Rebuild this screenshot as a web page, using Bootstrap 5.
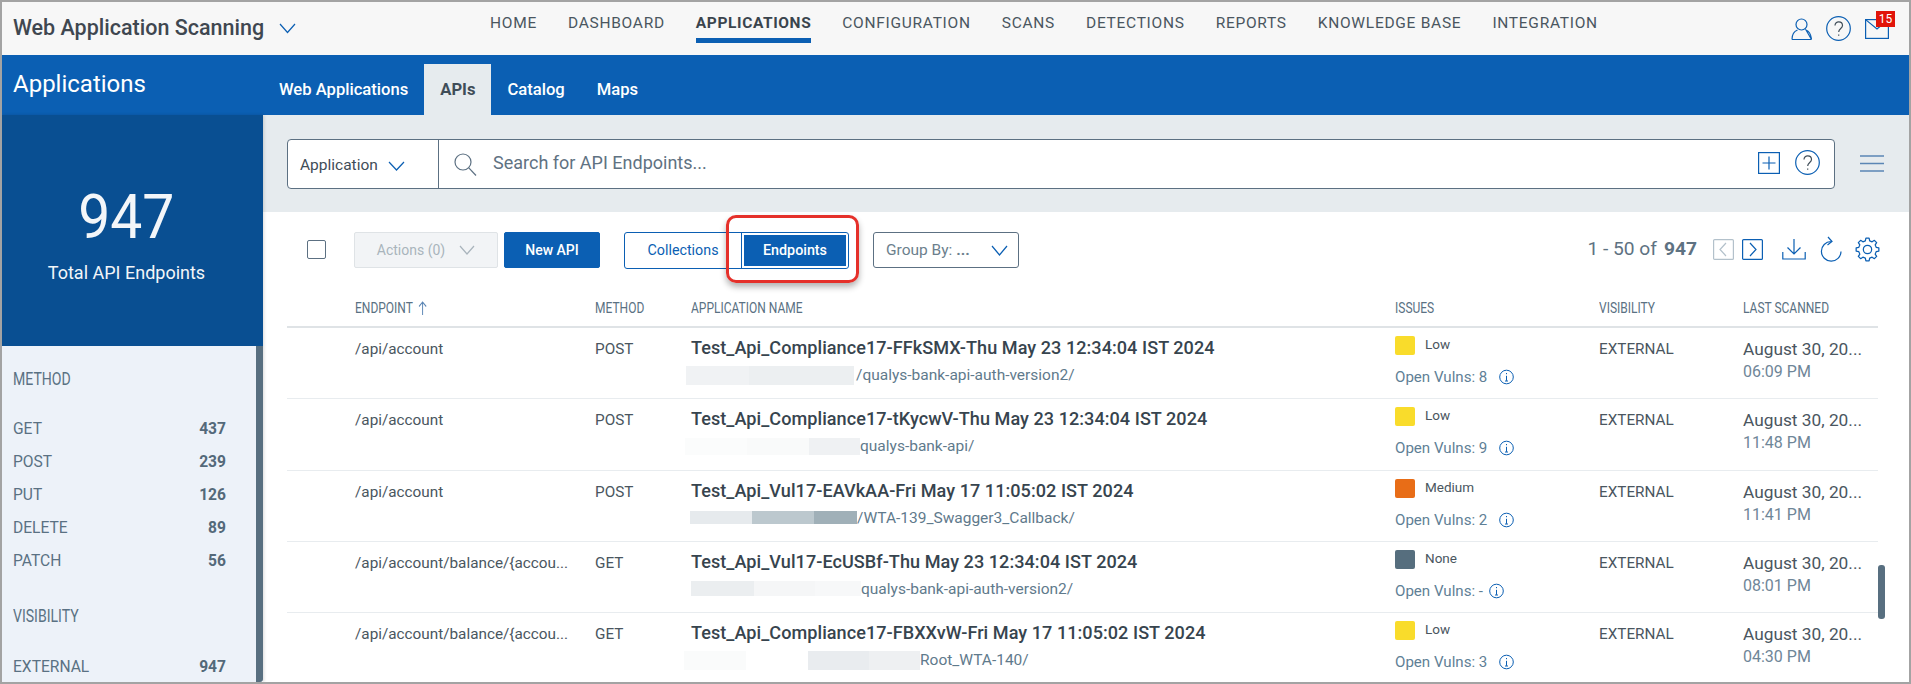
<!DOCTYPE html>
<html lang="en"><head><meta charset="utf-8"><title>Web Application Scanning</title>
<link href="https://cdn.jsdelivr.net/npm/bootstrap@5.3.0/dist/css/bootstrap.min.css" rel="stylesheet">
<style>
html,body{height:100%;margin:0;overflow:hidden;background:#fff}
body{font-family:Roboto,"Liberation Sans",sans-serif;color:#3f4d58}
svg{display:block;fill:none;stroke:#0b5fb3;stroke-width:1.2}
.frame{height:684px;border:2px solid #a3a3a3;display:flex;flex-direction:column;overflow:hidden}
.topbar{height:53px;background:#f7f7f7;flex:none}
.brand-name{font-size:21.5px;font-weight:500;color:#3f4750;margin-left:11px;width:250px;white-space:nowrap}
.brand-chev{margin:0 0 0 16px}
.mainnav{margin-left:194px;gap:31px;height:41px}
.mainnav .nav-link{padding:13px 0 0;height:41px;font-size:15.5px;letter-spacing:.72px;color:#4a5660;line-height:17px}
.mainnav .nav-link.active{font-weight:700;color:#3a444d;border-bottom:5px solid #0b5fb3;letter-spacing:.6px}
.top-icons{margin-left:auto;margin-right:20px;gap:14px}
.mail-wrap{position:relative}
.mail-badge{position:absolute;left:11px;top:-8px;width:19px;height:16px;background:#e1140a;color:#fff;font-size:12px;line-height:16px;text-align:center}
.bluebar{height:60px;background:#0b5fb3;flex:none}
.bar-title{width:261px;padding-left:11px;color:#fff;font-size:24px;padding-top:15px;line-height:28px}
.tabrow{align-self:flex-end;height:51px}
.tabrow .nav-link{padding:0 16px;line-height:52px;height:51px;color:#fff;font-size:16.6px;font-weight:500}
.tabrow .nav-link.active{background:#e6ebee;color:#3f4d58;font-weight:700}
.bodyrow{flex:1;min-height:0}
.leftcol{width:261px;flex:none;display:flex;flex-direction:column;box-shadow:1px 0 3px rgba(0,0,0,.15);position:relative}
.statbox{height:231px;background:#094f92;color:#f3f6f9;text-align:center;flex:none;padding:64px 12px 0 0}
.statnum{font-size:62px;line-height:76px;font-weight:400;display:inline-block;transform:scaleX(.92)}
.stattext{font-size:18px;line-height:24px;margin-top:6px}
.facets{flex:1;background:#edf2f9;border-right:7px solid #586f80;padding:0 30px 0 11px;border-bottom-right-radius:3px;color:#5a7183;overflow:hidden}
.facet-head{font-size:19px;line-height:24px;color:#5a7183;transform:scaleX(.74);transform-origin:left;margin-top:21px;margin-bottom:22px}
.facet-head.second{margin-top:26px;margin-bottom:23px}
.facet-row{height:33px;line-height:33px;font-size:15.6px}
.facet-row b{font-weight:700;color:#54697a}
.rightcol{flex:1;min-width:0;display:flex;flex-direction:column}
.searchzone{height:97px;background:#e6ebee;flex:none;padding:24px 0 0 24px}
.searchbox{width:1548px;height:50px;background:#fff;border:1px solid #5c7082;border-radius:4px}
.appselect{width:151px;border-right:1px solid #5c7082;padding-left:12px;color:#3f4d58;font-size:15.5px;padding-top:3px}
.appselect svg{margin-left:10px}
.searchglass{margin-left:15px}
.searchtext{margin-left:16px;font-size:18px;color:#5f7282;margin-top:-3px}
.searchend{margin-left:auto;margin-right:14px;gap:15px;margin-top:-3px}
.burger{margin-left:25px;margin-top:16px}
.toolbar{height:76px;padding:20px 29px 0 44px;flex:none}
.toolbar .btn{height:36px;padding:0;border-radius:2px;font-size:14px;line-height:34px}
.chk{width:19px;height:19px;border:1px solid #5c7082;border-radius:2px;margin-right:28px;background:#fff;margin-top:8px}
.toolbar .btn-actions{width:144px;background:#f2f4f6;border:1px solid #dfe3e6;color:#a9b4bc;display:flex;align-items:center;justify-content:center;gap:14px;margin-right:6px;opacity:1}
.toolbar .btn-new{width:96px;background:#0b5fb3;border:1px solid #0b5fb3;color:#fff;font-weight:500;margin-right:24px}
.seg{position:relative;width:225px;height:37px;border:1px solid #0b5fb3;border-radius:3px;margin-right:24px;font-size:14.3px}
.seg-a{width:116px;text-align:center;color:#0b5fb3;line-height:35px}
.seg-b{flex:1;border-left:1px solid #0b5fb3;padding:2px}
.seg-b span{display:block;height:31px;background:#0b5fb3;color:#fff;font-weight:500;text-align:center;line-height:31px}
.redmark{position:absolute;left:101px;top:-18px;width:133px;height:68px;border:3px solid #e5302a;border-radius:10px;box-shadow:0 4px 6px rgba(0,0,0,.3)}
.toolbar .btn-group-by{width:146px;background:#fff;border:1px solid #5c7082;color:#6c7f8d;font-size:15.5px;display:flex;align-items:center;padding:0 10px 0 12px;justify-content:space-between;border-radius:3px}
.pager{margin-left:auto;color:#5e7282;font-size:19.2px;line-height:24px;margin-top:4px}
.pager b{font-weight:700;margin-left:7px}
.pg-box{width:21px;height:21px;margin-left:8px}
.pager .pg-first{margin-left:16px}
.dl{margin-left:19px}.rf{margin-left:14px}.gr{margin-left:13px}
.tablewrap{margin-left:24px;width:1598px;position:relative;flex:1;min-height:0;overflow:hidden}
.endtable{table-layout:fixed;width:1591px;margin:0;border-collapse:separate;border-spacing:0}
.endtable th{height:40px;padding:0;font-weight:400;font-size:15px;color:#5a7183;border-bottom:2px solid #dfe3e6;vertical-align:top;padding-top:11px;line-height:18px}
.hdr{display:inline-block;transform:scaleX(.8);transform-origin:left;white-space:nowrap}
.sortarrow{display:inline;margin-left:7px;vertical-align:-2px;stroke:#5b86b5}
.endtable td{height:71.3px;padding:0;border-bottom:1px solid #e8ecef;vertical-align:top;font-size:15.3px;color:#4a5660;line-height:22px}
.endtable td.pt10{padding-top:10px}
.app-title{font-size:18.07px;font-weight:500;line-height:22px;color:#37444e;margin-top:9px;white-space:nowrap;letter-spacing:.05px}
.app-sub{display:flex;align-items:center;height:22px;margin-top:5px;font-size:15.5px;color:#5f7a8c;white-space:nowrap}
.app-sub span{display:block;flex:none}
.app-sub .gapped{margin-left:2px}
.sev{margin-top:8px;display:flex;align-items:flex-start;font-size:13.5px;color:#4a5660;height:19px;line-height:17px}
.sw{display:block;width:20px;height:19px;border-radius:2px;margin-right:10px}
.vulns{margin-top:11px;color:#5f7f96;font-size:15.1px;display:flex;align-items:center;gap:12px}
.vulns.tight{gap:6px}
.scan1{margin-top:10px;font-size:17.3px;color:#4a5660}
.scan2{color:#6f8698;font-size:16px;line-height:24px}
.thumb{position:absolute;right:0;top:277px;width:7px;height:54px;background:#586f80;border-radius:3px}
</style></head><body>
<div class="frame">
 <header class="topbar d-flex align-items-center">
  <div class="brand-name">Web Application Scanning</div>
  <svg class="brand-chev" width="17" height="11" viewBox="0 0 17 11"><path d="M1 1l7.500 8.500L16 1"/></svg>
  <nav class="nav mainnav flex-nowrap align-self-start">
   <a class="nav-link" href="#">HOME</a><a class="nav-link" href="#">DASHBOARD</a><a class="nav-link active" href="#">APPLICATIONS</a><a class="nav-link" href="#">CONFIGURATION</a><a class="nav-link" href="#">SCANS</a><a class="nav-link" href="#">DETECTIONS</a><a class="nav-link" href="#">REPORTS</a><a class="nav-link" href="#">KNOWLEDGE BASE</a><a class="nav-link" href="#">INTEGRATION</a>
  </nav>
  <div class="top-icons d-flex align-items-center">
   <svg width="21" height="22" viewBox="0 0 21 22"><circle cx="10.500" cy="6.500" r="5.500"/><path d="M1 21.500c0-5 1.500-8 5.500-9.500M15 12c4 1.500 5 4.500 5.500 9.500zM1 21.500h19.500"/></svg>
   <svg width="25" height="25" viewBox="0 0 25 25"><circle cx="12.500" cy="12.500" r="11.800"/><path d="M9 9.500c0-5 7.500-4.500 7.500 0 0 3-3.800 3-3.800 6.500M12.700 18.500v1.300" stroke="#3f4d58"/></svg>
   <div class="mail-wrap"><svg width="24" height="20" viewBox="0 0 24 20"><rect x=".6" y=".6" width="22.800" height="18.800"/><path d="M.6.600L12 10 23.400.6"/></svg><span class="mail-badge">15</span></div>
  </div>
 </header>
 <div class="bluebar d-flex">
  <div class="bar-title">Applications</div>
  <nav class="nav tabrow flex-nowrap">
   <a class="nav-link" href="#">Web Applications</a><a class="nav-link active" href="#">APIs</a><a class="nav-link" href="#">Catalog</a><a class="nav-link" href="#">Maps</a>
  </nav>
 </div>
 <div class="bodyrow d-flex">
  <aside class="leftcol">
   <div class="statbox"><div class="statnum">947</div><div class="stattext">Total API Endpoints</div></div>
   <div class="facets">
    <div class="facet-head">METHOD</div>
    <div class="facet-row d-flex justify-content-between"><span>GET</span><b>437</b></div>
    <div class="facet-row d-flex justify-content-between"><span>POST</span><b>239</b></div>
    <div class="facet-row d-flex justify-content-between"><span>PUT</span><b>126</b></div>
    <div class="facet-row d-flex justify-content-between"><span>DELETE</span><b>89</b></div>
    <div class="facet-row d-flex justify-content-between"><span>PATCH</span><b>56</b></div>
    <div class="facet-head second">VISIBILITY</div>
    <div class="facet-row d-flex justify-content-between"><span>EXTERNAL</span><b>947</b></div>
   </div>
  </aside>
  <main class="rightcol">
   <div class="searchzone d-flex">
    <div class="searchbox d-flex align-items-center">
     <div class="appselect d-flex align-items-center h-100"><span>Application</span><svg width="17" height="10" viewBox="0 0 17 10"><path d="M1 1l7.500 8L16 1"/></svg></div>
     <svg class="searchglass" width="23" height="23" viewBox="0 0 23 23" style="stroke:#5c7082"><circle cx="9" cy="9" r="8"/><path d="M14.800 14.800L22 22.500"/></svg>
     <div class="searchtext">Search for API Endpoints...</div>
     <div class="searchend d-flex align-items-center">
      <svg width="22" height="22" viewBox="0 0 22 22"><rect x=".6" y=".6" width="20.800" height="20.800"/><path d="M11 4.500v13M4.500 11h13"/></svg>
      <svg width="25" height="25" viewBox="0 0 25 25"><circle cx="12.500" cy="12.500" r="11.800"/><path d="M9 9.500c0-5 7.500-4.500 7.500 0 0 3-3.800 3-3.800 6.500M12.700 18.500v1.300" stroke="#3f4d58"/></svg>
     </div>
    </div>
    <svg class="burger align-self-start" width="24" height="17" viewBox="0 0 24 17"><path d="M0 1h24M0 8.500h24M0 16h24" stroke="#5b86b5" stroke-width="1.400"/></svg>
   </div>
   <div class="toolbar d-flex align-items-start">
    <div class="chk"></div>
    <button class="btn btn-actions" type="button" disabled><span>Actions (0)</span><svg width="16" height="10" viewBox="0 0 16 10" style="stroke:#a9b4bc"><path d="M1 1l7 8 7-8"/></svg></button>
    <button class="btn btn-new" type="button">New API</button>
    <div class="seg d-flex">
     <div class="seg-a">Collections</div>
     <div class="seg-b"><span>Endpoints</span></div>
     <div class="redmark"></div>
    </div>
    <button class="btn btn-group-by" type="button"><span>Group By: <b>...</b></span><svg width="17" height="11" viewBox="0 0 17 11"><path d="M1 1l7.500 9L16 1"/></svg></button>
    <div class="pager d-flex align-items-center">
     <span>1 - 50 of</span><b>947</b>
     <svg class="pg-box pg-first" viewBox="0 0 21 21" style="stroke:#b3c1cb"><rect x=".6" y=".6" width="19.800" height="19.800" rx="1"/><path d="M13 4l-6 6.500 6 6.500"/></svg>
     <svg class="pg-box" viewBox="0 0 21 21"><rect x=".6" y=".6" width="19.800" height="19.800" rx="1"/><path d="M8 4l6 6.500-6 6.500"/></svg>
     <svg class="dl" width="24" height="24" viewBox="0 0 24 24"><path d="M12 2v15M5.500 10.500L12 17l6.500-6.500M.8 15v7h22.400v-7"/></svg>
     <svg class="rf" width="22" height="26" viewBox="0 0 22 26"><path d="M11 5.500a9.800 9.800 0 1 0 10 10M8 1l4 4.500-4.500 3.500"/></svg>
     <svg class="gr" width="25" height="25" viewBox="0 0 24 24"><path stroke-linejoin="round" d="M9.920 3.660L10.470 1.110H13.530L14.080 3.660 16.430 4.630 18.620 3.210 20.790 5.380 19.370 7.570 20.340 9.920 22.890 10.470V13.530L20.340 14.080 19.370 16.430 20.790 18.620 18.620 20.790 16.430 19.370 14.080 20.340 13.530 22.890H10.470L9.920 20.340 7.570 19.370 5.380 20.790 3.210 18.620 4.630 16.430 3.660 14.080 1.110 13.530V10.470L3.660 9.920 4.630 7.570 3.210 5.380 5.380 3.210 7.570 4.630Z"/><circle cx="12" cy="12" r="4"/></svg>
    </div>
   </div>
   <div class="tablewrap">
    <table class="endtable">
     <colgroup><col style="width:68px"><col style="width:240px"><col style="width:96px"><col style="width:704px"><col style="width:204px"><col style="width:144px"><col style="width:135px"></colgroup>
     <thead><tr><th></th><th><span class="hdr">ENDPOINT<svg class="sortarrow" width="11" height="14" viewBox="0 0 11 14"><path d="M5.500 14V1M1 5.500L5.500 1 10 5.500"/></svg></span></th><th><span class="hdr">METHOD</span></th><th><span class="hdr">APPLICATION NAME</span></th><th><span class="hdr">ISSUES</span></th><th><span class="hdr">VISIBILITY</span></th><th><span class="hdr">LAST SCANNED</span></th></tr></thead>
     <tbody id="rows">
      <tr><td></td><td class="pt10">/api/account</td><td class="pt10">POST</td>
       <td><div class="app-title">Test_Api_Compliance17-FFkSMX-Thu May 23 12:34:04 IST 2024</div><div class="app-sub" style="margin-left:-5px"><span style="width:63px;height:19px;background:#f0f2f4"></span><span style="width:105px;height:19px;background:#eceff1"></span><span class="gapped">/qualys-bank-api-auth-version2/</span></div></td>
       <td><div class="sev"><span class="sw" style="background:#f9dc2b"></span>Low</div><div class="vulns">Open Vulns: 8 <svg width="15" height="16" viewBox="0 0 15 16" style="stroke-width:1"><circle cx="7.500" cy="8" r="6.800"/><path d="M7.500 6.800v5M6 12h3M7.500 4v1.200"/></svg></div></td>
       <td class="pt10">EXTERNAL</td><td><div class="scan1">August 30, 20...</div><div class="scan2">06:09 PM</div></td></tr>
      <tr><td></td><td class="pt10">/api/account</td><td class="pt10">POST</td>
       <td><div class="app-title">Test_Api_Compliance17-tKycwV-Thu May 23 12:34:04 IST 2024</div><div class="app-sub" style="margin-left:-6px"><span style="width:62px;height:17px;background:#fbfcfc"></span><span style="width:62px;height:17px;background:#f9fafa"></span><span style="width:51px;height:17px;background:#eff1f3"></span><span>qualys-bank-api/</span></div></td>
       <td><div class="sev"><span class="sw" style="background:#f9dc2b"></span>Low</div><div class="vulns">Open Vulns: 9 <svg width="15" height="16" viewBox="0 0 15 16" style="stroke-width:1"><circle cx="7.500" cy="8" r="6.800"/><path d="M7.500 6.800v5M6 12h3M7.500 4v1.200"/></svg></div></td>
       <td class="pt10">EXTERNAL</td><td><div class="scan1">August 30, 20...</div><div class="scan2">11:48 PM</div></td></tr>
      <tr><td></td><td class="pt10">/api/account</td><td class="pt10">POST</td>
       <td><div class="app-title">Test_Api_Vul17-EAVkAA-Fri May 17 11:05:02 IST 2024</div><div class="app-sub" style="margin-left:-1px"><span style="width:62px;height:13px;background:#e6eaed"></span><span style="width:62px;height:13px;background:#bcc8ce"></span><span style="width:43px;height:13px;background:#a0b0b8"></span><span>/WTA-139_Swagger3_Callback/</span></div></td>
       <td><div class="sev"><span class="sw" style="background:#e86d17"></span>Medium</div><div class="vulns">Open Vulns: 2 <svg width="15" height="16" viewBox="0 0 15 16" style="stroke-width:1"><circle cx="7.500" cy="8" r="6.800"/><path d="M7.500 6.800v5M6 12h3M7.500 4v1.200"/></svg></div></td>
       <td class="pt10">EXTERNAL</td><td><div class="scan1">August 30, 20...</div><div class="scan2">11:41 PM</div></td></tr>
      <tr><td></td><td class="pt10">/api/account/balance/{accou...</td><td class="pt10">GET</td>
       <td><div class="app-title">Test_Api_Vul17-EcUSBf-Thu May 23 12:34:04 IST 2024</div><div class="app-sub"><span style="width:63px;height:15px;background:#ebeef0"></span><span style="width:61px;height:15px;background:#f5f6f7"></span><span style="width:46px;height:15px;background:#f7f8f9"></span><span>qualys-bank-api-auth-version2/</span></div></td>
       <td><div class="sev"><span class="sw" style="background:#566e7e"></span>None</div><div class="vulns tight">Open Vulns: - <svg width="15" height="16" viewBox="0 0 15 16" style="stroke-width:1"><circle cx="7.500" cy="8" r="6.800"/><path d="M7.500 6.800v5M6 12h3M7.500 4v1.200"/></svg></div></td>
       <td class="pt10">EXTERNAL</td><td><div class="scan1">August 30, 20...</div><div class="scan2">08:01 PM</div></td></tr>
      <tr><td></td><td class="pt10">/api/account/balance/{accou...</td><td class="pt10">GET</td>
       <td><div class="app-title">Test_Api_Compliance17-FBXXvW-Fri May 17 11:05:02 IST 2024</div><div class="app-sub" style="margin-left:-7px"><span style="width:62px;height:19px;background:#fafbfb"></span><span style="width:62px;height:19px"></span><span style="width:61px;height:19px;background:#e9ecef"></span><span style="width:51px;height:19px;background:#eef0f2"></span><span>Root_WTA-140/</span></div></td>
       <td><div class="sev"><span class="sw" style="background:#f9dc2b"></span>Low</div><div class="vulns">Open Vulns: 3 <svg width="15" height="16" viewBox="0 0 15 16" style="stroke-width:1"><circle cx="7.500" cy="8" r="6.800"/><path d="M7.500 6.800v5M6 12h3M7.500 4v1.200"/></svg></div></td>
       <td class="pt10">EXTERNAL</td><td><div class="scan1">August 30, 20...</div><div class="scan2">04:30 PM</div></td></tr>
     </tbody>
    </table>
    <div class="thumb"></div>
   </div>
  </main>
 </div>
</div>
<script src="https://cdn.jsdelivr.net/npm/bootstrap@5.3.0/dist/js/bootstrap.bundle.min.js"></script>
</body></html>
